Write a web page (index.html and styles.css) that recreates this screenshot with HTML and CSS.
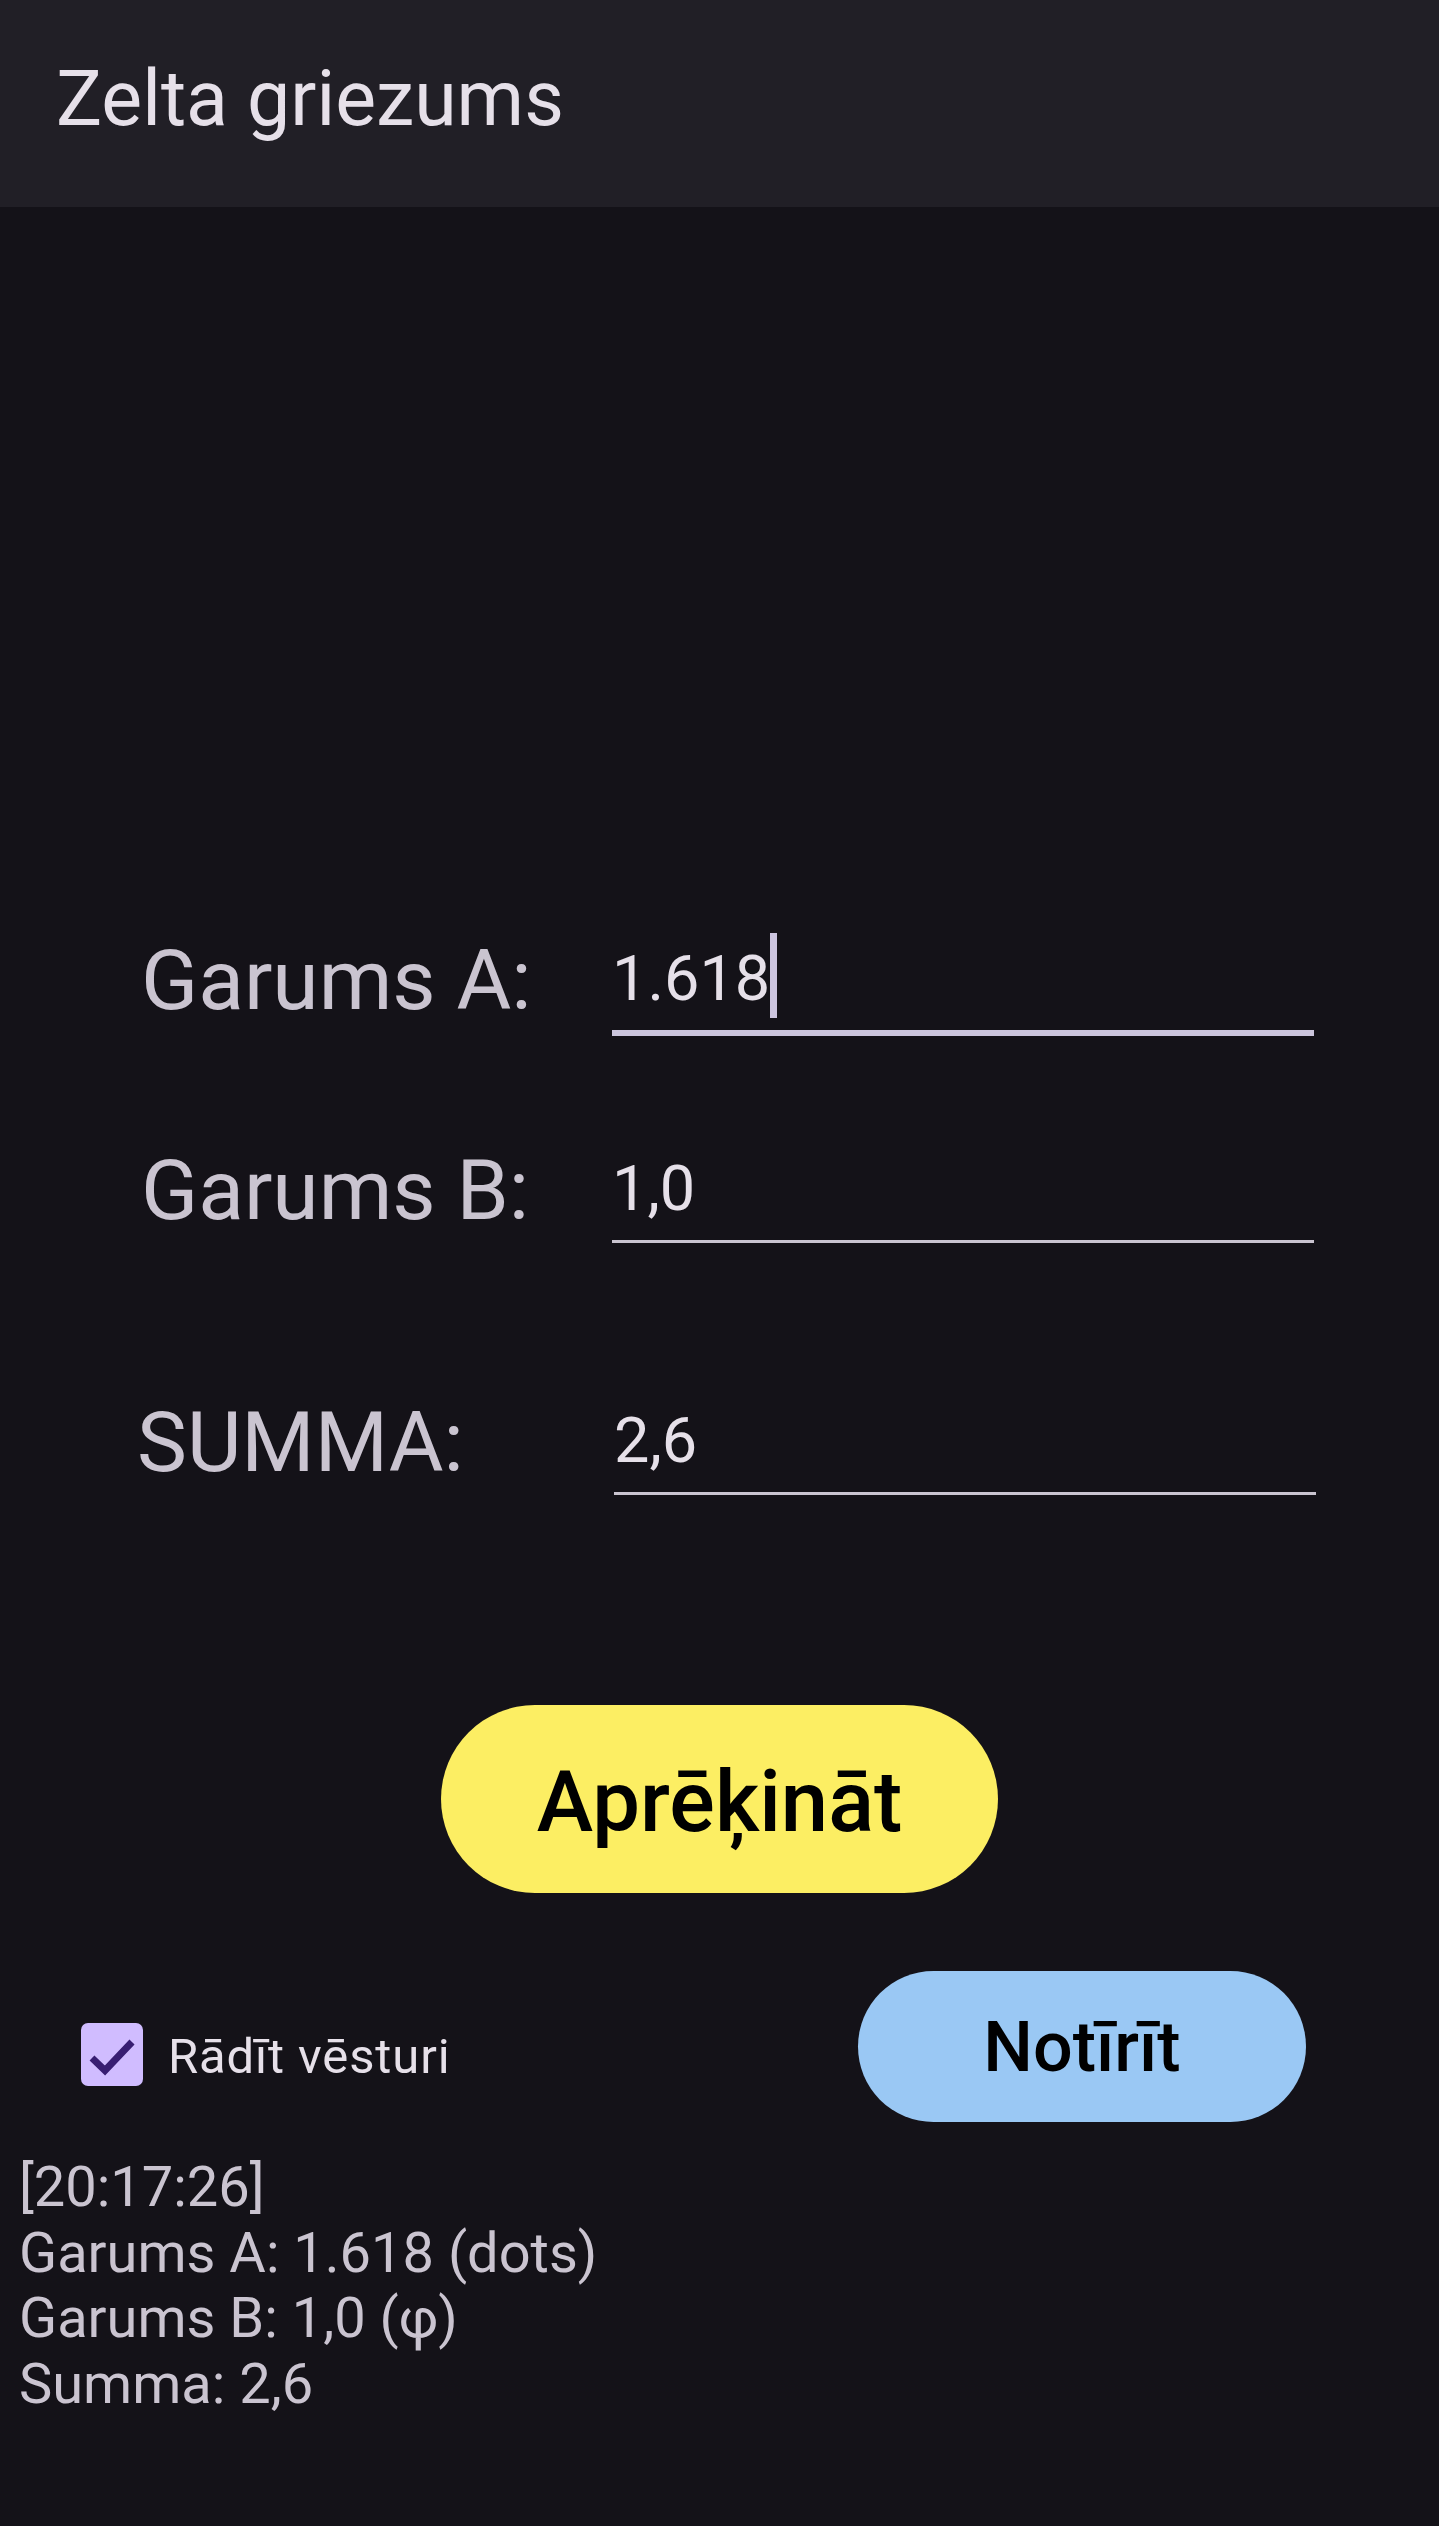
FILE: index.html
```html
<!DOCTYPE html>
<html lang="lv">
<head>
<meta charset="utf-8">
<title>Zelta griezums</title>
<link rel="stylesheet" href="styles.css">
</head>
<body>
<header class="appbar">
  <h1 class="appbar-title">Zelta griezums</h1>
</header>
<main class="content">
  <section class="form">
    <div class="row row-a">
      <div class="label">Garums A:</div>
      <div class="field focused"><span class="value">1.618</span><span class="caret"></span></div>
    </div>
    <div class="row row-b">
      <div class="label">Garums B:</div>
      <div class="field"><span class="value">1,0</span></div>
    </div>
    <div class="row row-sum">
      <div class="label label-sum">SUMMA:</div>
      <div class="field field-sum"><span class="value">2,6</span></div>
    </div>
  </section>
  <div class="calc-wrap">
    <button class="btn btn-calc" type="button">Aprēķināt</button>
  </div>
  <div class="options">
    <label class="check">
      <span class="check-box">
        <svg viewBox="0 0 62 63" width="62" height="63" aria-hidden="true">
          <path d="M11 35 L24 47.5 L51 19" fill="none" stroke="#381e72" stroke-width="7" stroke-linecap="butt" stroke-linejoin="miter"/>
        </svg>
      </span>
      <span class="check-label">Rādīt vēsturi</span>
    </label>
    <button class="btn btn-clear" type="button">Notīrīt</button>
  </div>
  <div class="history">
    <div>[20:17:26]</div>
    <div>Garums A: 1.618 (dots)</div>
    <div>Garums B: 1,0 (φ)</div>
    <div>Summa: 2,6</div>
  </div>
</main>
</body>
</html>
```
FILE: styles.css
```css
html, body {
  margin: 0;
  padding: 0;
}
body {
  background: #141218;
  min-height: 2526px;
  font-family: Roboto, "Noto Sans", "Liberation Sans", sans-serif;
  color: #e6e0e9;
}
.appbar {
  height: 207px;
  box-sizing: border-box;
  background: #211f26;
  padding: 54px 0 0 56px;
}
.appbar-title {
  margin: 0;
  font-size: 77px;
  font-weight: 400;
  line-height: 90px;
  color: #e6e0e9;
}
.content {
  display: flex;
  flex-direction: column;
}
.form {
  display: flex;
  flex-direction: column;
  padding-top: 724px;
}
.row {
  display: flex;
  align-items: flex-start;
  padding-left: 141px;
}
.row-b { margin-top: 105px; }
.row-sum { margin-top: 150px; }
.label {
  width: 471px;
  font-size: 84px;
  line-height: 100px;
  color: #cac4d0;
}
.label-sum {
  margin-left: -4px;
  width: 475px;
}
.field {
  width: 702px;
  margin-top: 11px;
  font-size: 63px;
  line-height: 74px;
  padding-bottom: 14px;
  border-bottom: 3px solid #cac4d0;
  color: #e6e0e9;
  white-space: nowrap;
}
.field.focused {
  border-bottom: 6px solid #ccc5dd;
}
.field-sum {
  margin-left: 2px;
}
.caret {
  display: inline-block;
  width: 7px;
  height: 85px;
  margin: -12px 0 -4px 0;
  vertical-align: -14px;
  background: #cdc5df;
}
.calc-wrap {
  display: flex;
  justify-content: center;
  margin-top: 210px;
}
.btn {
  border: none;
  display: flex;
  align-items: center;
  justify-content: center;
  font-family: Roboto, "Noto Sans", "Liberation Sans", sans-serif;
  font-weight: 500;
  color: #000;
  padding: 0;
  cursor: pointer;
}
.btn-calc {
  width: 557px;
  height: 188px;
  border-radius: 94px;
  background: #fcee63;
  font-size: 85px;
  padding-top: 6px;
  box-sizing: border-box;
}
.options {
  display: flex;
  justify-content: space-between;
  align-items: flex-start;
  margin-top: 78px;
  padding: 0 133px 0 81px;
}
.check {
  display: flex;
  align-items: center;
  gap: 25px;
  margin-top: 52px;
}
.check-box {
  display: block;
  width: 62px;
  height: 63px;
  border-radius: 7px;
  background: #d0bcff;
}
.check-box svg {
  display: block;
}
.check-label {
  font-size: 49px;
  line-height: 57px;
  letter-spacing: 0.875px;
  color: #e6e0e9;
  margin-top: 3px;
}
.btn-clear {
  width: 448px;
  height: 151px;
  border-radius: 76px;
  background: #9ac8f4;
  font-size: 70px;
}
.history {
  margin-top: 33px;
  padding-left: 19px;
  font-size: 56px;
  line-height: 65.6px;
  color: #cac4d0;
}
```
